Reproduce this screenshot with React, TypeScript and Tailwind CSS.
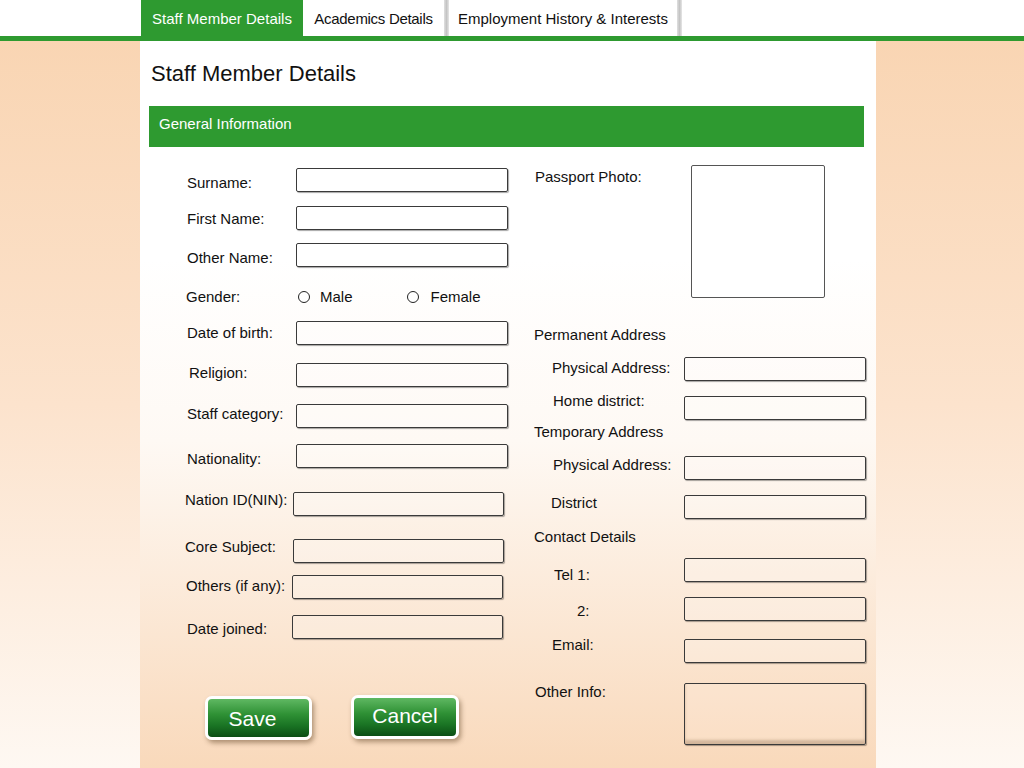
import React from "react";

const font = { fontFamily: '"Liberation Sans", Arial, sans-serif' };

type LeftRow = {
  label: string;
  mt: string;
  pl: string;
  lw: string;
  lpt: string;
  iw: string;
};

const leftRows: LeftRow[] = [
  { label: "Surname:", mt: "mt-[21px]", pl: "pl-[47px]", lw: "w-[109px]", lpt: "mt-[6px]", iw: "w-[212px]" },
  { label: "First Name:", mt: "mt-[14px]", pl: "pl-[47px]", lw: "w-[109px]", lpt: "mt-[4px]", iw: "w-[212px]" },
  { label: "Other Name:", mt: "mt-[13px]", pl: "pl-[47px]", lw: "w-[109px]", lpt: "mt-[6px]", iw: "w-[212px]" },
];

const leftRows2: LeftRow[] = [
  { label: "Date of birth:", mt: "mt-[12px]", pl: "pl-[47px]", lw: "w-[109px]", lpt: "mt-[3px]", iw: "w-[212px]" },
  { label: "Religion:", mt: "mt-[18px]", pl: "pl-[49px]", lw: "w-[107px]", lpt: "mt-[1px]", iw: "w-[212px]" },
  { label: "Staff category:", mt: "mt-[17px]", pl: "pl-[47px]", lw: "w-[109px]", lpt: "mt-[1px]", iw: "w-[212px]" },
  { label: "Nationality:", mt: "mt-[16px]", pl: "pl-[47px]", lw: "w-[109px]", lpt: "mt-[6px]", iw: "w-[212px]" },
  { label: "Nation ID(NIN):", mt: "mt-[24px]", pl: "pl-[45px]", lw: "w-[108px]", lpt: "-mt-[1px]", iw: "w-[211px]" },
  { label: "Core Subject:", mt: "mt-[23px]", pl: "pl-[45px]", lw: "w-[108px]", lpt: "-mt-[1px]", iw: "w-[211px]" },
  { label: "Others (if any):", mt: "mt-[12px]", pl: "pl-[46px]", lw: "w-[106px]", lpt: "mt-[2px]", iw: "w-[211px]" },
  { label: "Date joined:", mt: "mt-[16px]", pl: "pl-[47px]", lw: "w-[105px]", lpt: "mt-[5px]", iw: "w-[211px]" },
];

type RightItem =
  | { kind: "heading"; label: string; mt: string }
  | { kind: "field"; label: string; mt: string; pl: string; lw: string; lpt: string };

const rightItems: RightItem[] = [
  { kind: "heading", label: "Permanent Address", mt: "mt-[28px]" },
  { kind: "field", label: "Physical Address:", mt: "mt-[13px]", pl: "pl-[32px]", lw: "w-[132px]", lpt: "mt-[2px]" },
  { kind: "field", label: "Home district:", mt: "mt-[15px]", pl: "pl-[33px]", lw: "w-[131px]", lpt: "-mt-[4px]" },
  { kind: "heading", label: "Temporary Address", mt: "mt-[3px]" },
  { kind: "field", label: "Physical Address:", mt: "mt-[15px]", pl: "pl-[33px]", lw: "w-[131px]", lpt: "mt-[0px]" },
  { kind: "field", label: "District", mt: "mt-[15px]", pl: "pl-[31px]", lw: "w-[133px]", lpt: "-mt-[1px]" },
  { kind: "heading", label: "Contact Details", mt: "mt-[9px]" },
  { kind: "field", label: "Tel 1:", mt: "mt-[12px]", pl: "pl-[34px]", lw: "w-[130px]", lpt: "mt-[8px]" },
  { kind: "field", label: "2:", mt: "mt-[15px]", pl: "pl-[57px]", lw: "w-[107px]", lpt: "mt-[5px]" },
  { kind: "field", label: "Email:", mt: "mt-[18px]", pl: "pl-[32px]", lw: "w-[132px]", lpt: "-mt-[3px]" },
];

function Box({ w, h = "h-[24px]" }: { w: string; h?: string }) {
  return (
    <div
      className={`${w} ${h} shrink-0 rounded-[2px] border border-[#3a3a3a] bg-white/20 shadow-[1px_1px_1px_rgba(0,0,0,0.35)]`}
    />
  );
}

function Radio({ label, gap }: { label: string; gap: string }) {
  return (
    <div className={`flex items-center ${gap}`}>
      <span className="h-[12px] w-[12px] rounded-full border border-[#222] bg-white" />
      <span className="text-[15px] text-[#111] leading-[18px]">{label}</span>
    </div>
  );
}

function GreenButton({ text, cls }: { text: string; cls: string }) {
  return (
    <button
      className={`${cls} h-[44px] rounded-[7px] border-[3px] border-white bg-[linear-gradient(to_bottom,#5fb862_0%,#2f9135_40%,#1a7424_70%,#0b4e14_100%)] text-[21px] leading-none text-white shadow-[2px_3px_5px_rgba(80,50,20,0.45)]`}
      style={font}
    >
      {text}
    </button>
  );
}

export default function App() {
  return (
    <div className="min-h-[768px] w-full flex flex-col" style={font}>
      {/* tab bar */}
      <div className="h-[36px] bg-white flex pl-[141px]">
        <div className="w-[162px] bg-[#2e9a30] text-white text-[15px] flex items-center justify-center pt-[3px]">
          Staff Member Details
        </div>
        <div className="w-[141px] text-[15px] text-[#111] flex items-center justify-center tracking-[-0.3px] pt-[3px]">
          Academics Details
        </div>
        <div className="w-[5px] bg-[linear-gradient(to_right,#e0e0e0,#c4c4c4,#e6e6e6)]" />
        <div className="w-[228px] text-[15px] text-[#111] flex items-center justify-center pt-[3px]">
          Employment History &amp; Interests
        </div>
        <div className="w-[5px] bg-[linear-gradient(to_right,#e0e0e0,#c4c4c4,#e6e6e6)]" />
      </div>
      <div className="h-[5px] bg-[#2e9a30]" />

      {/* body */}
      <div className="flex-1 flex bg-[linear-gradient(to_bottom,#f9d5b3_0%,#fce3cd_50%,#fef8f2_100%)]">
        <div className="ml-[140px] w-[736px] h-[727px] bg-[linear-gradient(to_bottom,#ffffff_0%,#ffffff_30%,#fef9f4_55%,#f9d9bb_100%)]">
          <h1 className="pl-[11px] pt-[20px] text-[22px] leading-[26px] text-[#111]">
            Staff Member Details
          </h1>
          <div className="ml-[9px] mt-[19px] w-[715px] h-[41px] bg-[#2e9a30] text-white text-[15px] pl-[10px] pt-[9px] leading-[18px]">
            General Information
          </div>

          <div className="flex">
            {/* left column */}
            <div className="w-[380px] flex flex-col">
              {leftRows.map((r) => (
                <div key={r.label} className={`flex items-start h-[24px] ${r.mt} ${r.pl}`}>
                  <span className={`${r.lw} ${r.lpt} text-[15px] leading-[18px] text-[#111]`}>
                    {r.label}
                  </span>
                  <Box w={r.iw} />
                </div>
              ))}

              <div className="flex items-center mt-[18px] h-[24px] pl-[46px]">
                <span className="w-[112px] text-[15px] leading-[18px] text-[#111]">Gender:</span>
                <Radio label="Male" gap="gap-[10px]" />
                <div className="ml-[54px]">
                  <Radio label="Female" gap="gap-[12px]" />
                </div>
              </div>

              {leftRows2.map((r) => (
                <div key={r.label} className={`flex items-start h-[24px] ${r.mt} ${r.pl}`}>
                  <span className={`${r.lw} ${r.lpt} text-[15px] leading-[18px] text-[#111]`}>
                    {r.label}
                  </span>
                  <Box w={r.iw} />
                </div>
              ))}

              <div className="flex mt-[56px] pl-[65px] gap-[39px]">
                <GreenButton text="Save" cls="w-[107px] mt-[1px] pr-[12px]" />
                <GreenButton text="Cancel" cls="w-[108px] mt-0 pb-[3px]" />
              </div>
            </div>

            {/* right column */}
            <div className="flex-1 flex flex-col">
              <div className="flex items-start mt-[18px] pl-[15px]">
                <span className="w-[156px] mt-[3px] text-[15px] leading-[18px] text-[#111]">
                  Passport Photo:
                </span>
                <div className="w-[134px] h-[133px] rounded-[2px] border-[1.5px] border-[#555] bg-white" />
              </div>

              {rightItems.map((it, i) =>
                it.kind === "heading" ? (
                  <div
                    key={i}
                    className={`${it.mt} h-[18px] pl-[14px] text-[15px] leading-[18px] text-[#111]`}
                  >
                    {it.label}
                  </div>
                ) : (
                  <div key={i} className={`flex items-start h-[24px] ${it.mt} ${it.pl}`}>
                    <span className={`${it.lw} ${it.lpt} text-[15px] leading-[18px] text-[#111]`}>
                      {it.label}
                    </span>
                    <Box w="w-[182px]" />
                  </div>
                )
              )}

              <div className="flex items-start mt-[20px] pl-[15px]">
                <span className="w-[149px] text-[15px] leading-[18px] text-[#111]">Other Info:</span>
                <div className="w-[182px] h-[62px] rounded-[2px] border border-[#3a3a3a] bg-white/10 shadow-[inset_0_-4px_3px_rgba(90,60,30,0.25),1px_1px_1px_rgba(0,0,0,0.35)]" />
              </div>
            </div>
          </div>
        </div>
      </div>
    </div>
  );
}
